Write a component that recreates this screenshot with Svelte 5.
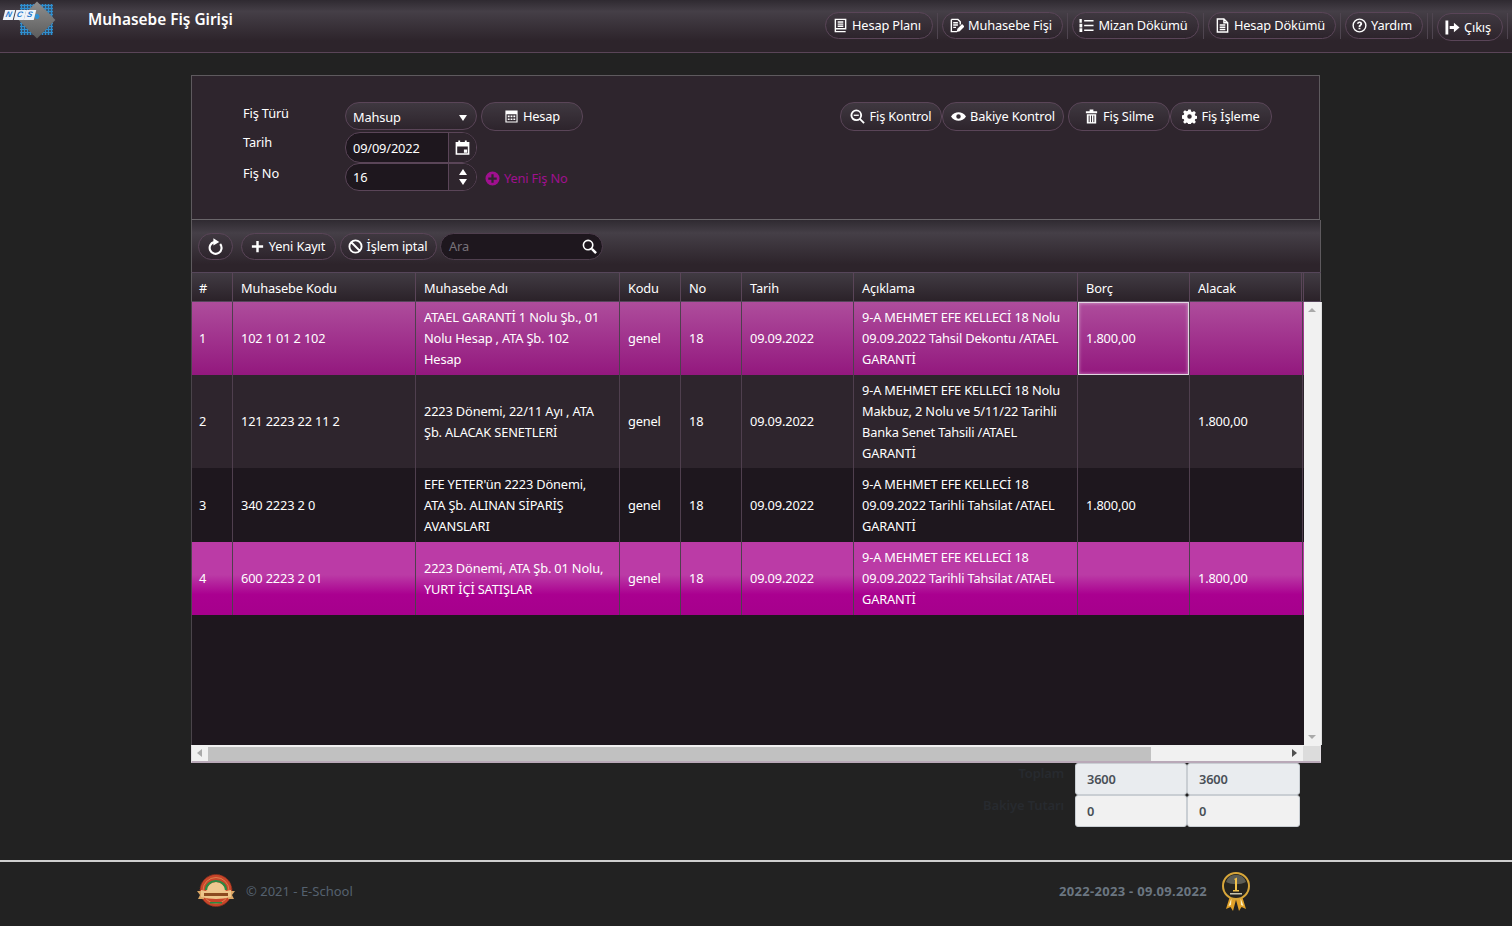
<script>
  const icons = {
    book: [['M2.500 1.500h11v10h-11z M2.500 11.500v3h11 M5 4.200h6 M5 6.500h6 M5 8.800h6', 's']],
    edit: [['M2.500 1.500h7l2.500 2.500v3 M2.500 1.500v13h6 M4.500 5h5 M4.500 7.500h5 M4.500 10h3', 's'], ['M8 15l1-3.500 5-5 2.500 2.500-5 5z', 'f']],
    list: [['M5.500 3h10 M5.500 8h10 M5.500 13h10', 's'], ['M.5 1h2.500v4H.5z M.5 6h3v4h-3z M.5 11h3v4h-3z', 'f']],
    doc: [['M2.500 1h7l4 4v10h-11z M5 7.500h6 M5 9.800h6 M5 12.200h6 M9.500 1v4h4', 's']],
    help: [['M8 1.200a6.800 6.800 0 1 0 0 13.600A6.800 6.800 0 0 0 8 1.200z', 's'], ['M5.200 6a2.900 2.900 0 0 1 5.700.2c0 1.800-1.900 1.900-1.900 3.300H7c0-2.300 1.900-2.200 1.900-3.300a.9.9 0 0 0-1.800-.1z M7 10.300h2v1.800H7z', 'f']],
    exit: [['M.5 .5h3v15h-3z M5 6.500h4.500V3L15.500 8l-6 5V9.500H5z', 'f']],
    calc: [['M1.500 1.500h13v13h-13z M2.700 5.600h10.600v7.700H2.700z M4 7h2v1.700H4z M7 7h2v1.700H7z M10 7h2v1.700h-2z M4 10h2v1.700H4z M7 10h2v1.700H7z M10 10h2v1.700h-2z', 'e']],
    zoomminus: [['M6.700 1.500a5.200 5.200 0 1 0 0 10.400 5.200 5.200 0 0 0 0-10.400z M10.500 10.500l4.500 4.500', 's2'], ['M4 6h5.400v1.400H4z', 'f']],
    eye: [['M0 8c2-3.200 5-4.600 8-4.600S14 4.800 16 8c-2 3.200-5 4.600-8 4.600S2 11.200 0 8z M8 5.600a2.400 2.400 0 1 0 0 4.800 2.400 2.400 0 0 0 0-4.800z', 'e']],
    trash: [['M2 2.500h12v2H2z M6 .5h4v2H6z M3 5.500h10V15.500H3z', 'f'], ['M5.500 7v7 M8 7v7 M10.500 7v7', 'sd']],
    gear: [['M6.700 .5h2.600l.4 2.200 1.300.6 1.900-1.200 1.900 1.900-1.200 1.900.6 1.300 2.200.4v2.600l-2.200.4-.6 1.300 1.200 1.900-1.900 1.900-1.900-1.200-1.300.6-.4 2.200H6.700l-.4-2.200-1.300-.6-1.900 1.200-1.900-1.900 1.200-1.900-.6-1.300-2.200-.4V6.700l2.200-.4.6-1.300-1.200-1.900 1.900-1.900 1.900 1.200 1.300-.6z M8 5.600a2.400 2.400 0 1 0 0 4.800 2.400 2.400 0 0 0 0-4.800z', 'e']],
    refresh: [['M6.600 3.900A5.600 5.600 0 1 0 12.400 5.700', 's2'], ['M6 .3l5.500 3.400L6 7z', 'f']],
    plus: [['M6.700 2h2.600v4.700H14v2.600H9.300V14H6.700V9.300H2V6.700h4.700z', 'f']],
    ban: [['M8 1.500a6.500 6.500 0 1 0 0 13 6.500 6.500 0 0 0 0-13z M3.500 3.500l9 9', 's2']],
    search: [['M6.500 1.500a5 5 0 1 0 0 10 5 5 0 0 0 0-10z', 's15'], ['M10.500 10.500l4.500 4.500', 's25']],
    cal: [['M1.500 3h13v12h-13z M1.500 6h13', 's15'], ['M3.500 .5h2v3.500h-2z M10.500 .5h2v3.500h-2z M1.500 3h13v3h-13z M9.500 10h3.500v3.500H9.500z', 'f']],
    plusc: [['M8 .5a7.500 7.500 0 1 0 0 15 7.500 7.500 0 0 0 0-15z M6.800 3.500h2.400v3.300h3.300v2.400H9.200v3.300H6.800V9.200H3.500V6.800h3.300z', 'e']]
  };

  const topNav = [
    { icon: 'book', label: 'Hesap Planı', w: 108 },
    { icon: 'edit', label: 'Muhasebe Fişi', w: 121 },
    { icon: 'list', label: 'Mizan Dökümü', w: 127 },
    { icon: 'doc', label: 'Hesap Dökümü', w: 128 },
    { icon: 'help', label: 'Yardım', w: 78 }
  ];
  const actions = [
    { icon: 'zoomminus', label: 'Fiş Kontrol', w: 102 },
    { icon: 'eye', label: 'Bakiye Kontrol', w: 122 },
    { icon: 'trash', label: 'Fiş Silme', w: 102 },
    { icon: 'gear', label: 'Fiş İşleme', w: 102 }
  ];
  const head = ['#', 'Muhasebe Kodu', 'Muhasebe Adı', 'Kodu', 'No', 'Tarih', 'Açıklama', 'Borç', 'Alacak'];
  const rows = [
    { cls: 'pink h73', cells: ['1', '102 1 01 2 102', 'ATAEL GARANTİ 1 Nolu Şb., 01 Nolu Hesap , ATA Şb. 102 Hesap', 'genel', '18', '09.09.2022', '9-A MEHMET EFE KELLECİ 18 Nolu 09.09.2022 Tahsil Dekontu /ATAEL GARANTİ', '1.800,00', ''] },
    { cls: 'odd h93', cells: ['2', '121 2223 22 11 2', '2223 Dönemi, 22/11 Ayı , ATA Şb. ALACAK SENETLERİ', 'genel', '18', '09.09.2022', '9-A MEHMET EFE KELLECİ 18 Nolu Makbuz, 2 Nolu ve 5/11/22 Tarihli Banka Senet Tahsili /ATAEL GARANTİ', '', '1.800,00'] },
    { cls: 'even h74', cells: ['3', '340 2223 2 0', "EFE YETER'ün 2223 Dönemi, ATA Şb. ALINAN SİPARİŞ AVANSLARI", 'genel', '18', '09.09.2022', '9-A MEHMET EFE KELLECİ 18 09.09.2022 Tarihli Tahsilat /ATAEL GARANTİ', '1.800,00', ''] },
    { cls: 'mag h73', cells: ['4', '600 2223 2 01', '2223 Dönemi, ATA Şb. 01 Nolu, YURT İÇİ SATIŞLAR', 'genel', '18', '09.09.2022', '9-A MEHMET EFE KELLECİ 18 09.09.2022 Tarihli Tahsilat /ATAEL GARANTİ', '', '1.800,00'] }
  ];
</script>

{#snippet icon(name)}
  <svg class="ic" viewBox="0 0 16 16" aria-hidden="true">
    {#each icons[name] as p}
      <path d={p[0]} class={p[1]} />
    {/each}
  </svg>
{/snippet}

<div class="page">
  <header class="top">
    <div class="logo">
      <div class="dots"></div>
      <div class="diamond"><span class="hole"></span></div>
      <div class="ncs"><span>N</span><span>C</span><span>S</span></div>
    </div>
    <h1>Muhasebe Fiş Girişi</h1>
    <nav>
      {#each topNav as b}
        <button class="pill" style="width:{b.w}px">{@render icon(b.icon)}{b.label}</button>
        <i class="sep"></i>
      {/each}
      <i class="sep2"></i>
      <button class="pill exit">{@render icon('exit')}Çıkış</button>
      <i class="sep last"></i>
    </nav>
  </header>

  <main>
    <section class="form">
      <div class="fields">
        <label class="l1">Fiş Türü</label>
        <div class="select">Mahsup<b class="tri"></b></div>
        <button class="pill hesap">{@render icon('calc')}Hesap</button>

        <label>Tarih</label>
        <div class="input"><span>09/09/2022</span><em>{@render icon('cal')}</em></div>
        <span></span>

        <label>Fiş No</label>
        <div class="input spin"><span>16</span><em><b class="tri up"></b><b class="tri"></b></em></div>
        <a class="newno">{@render icon('plusc')}Yeni Fiş No</a>
      </div>
      <div class="actions">
        {#each actions as b}
          <button class="pill" style="width:{b.w}px">{@render icon(b.icon)}{b.label}</button>
        {/each}
      </div>
    </section>

    <section class="grid">
      <div class="toolbar">
        <button class="pill round">{@render icon('refresh')}</button>
        <button class="pill ynk">{@render icon('plus')}Yeni Kayıt</button>
        <button class="pill ipt">{@render icon('ban')}İşlem iptal</button>
        <div class="searchbox"><span>Ara</span>{@render icon('search')}</div>
      </div>
      <div class="thead tr">
        {#each head as h}<div class="th">{h}</div>{/each}
        <div class="th"></div>
        <div class="th end"></div>
      </div>
      <div class="viewport">
        <div class="tbody">
          {#each rows as r, ri}
            <div class="tr {r.cls}">
              {#each r.cells as c, ci}
                <div class="td" class:sel={ri === 0 && ci === 7}><span>{c}</span></div>
              {/each}
              <div class="td"></div>
            </div>
          {/each}
        </div>
        <div class="vbar"><b class="tri gup"></b><b class="tri gdn"></b></div>
      </div>
      <div class="hbar">
        <b class="tri gl"></b>
        <div class="thumb"></div>
        <b class="tri gr"></b>
        <div class="corner"></div>
      </div>
    </section>

    <section class="totals">
      <div class="sumlabels"><span>Toplam</span><span>Bakiye Tutarı</span></div>
      <div class="sumgrid">
        <div class="a">3600</div><div class="a">3600</div>
        <div class="b">0</div><div class="b">0</div>
      </div>
    </section>
  </main>

  <footer>
    <div class="fl">
      <svg class="seal" viewBox="0 0 38 34">
        <circle cx="19" cy="16.500" r="16" fill="#c8452a" stroke="#8c2f1c" stroke-width="1" stroke-dasharray="1.500 1"/>
        <circle cx="19" cy="16.500" r="13" fill="none" stroke="#e29a5a" stroke-width=".7"/>
        <path d="M9 18a10 10 0 0 1 20 0z" fill="#efc890"/>
        <path d="M9 16a10 9 0 0 1 20 0" fill="none" stroke="#2c8a42" stroke-width="2.200"/>
        <path d="M0 17h6l1 8H1l2-4zM38 17h-6l-1 8h6l-2-4z" fill="#dca765"/>
        <path d="M4 16c10 2.500 20 2.500 30 0v7c-10 2.500-20 2.500-30 0z" fill="#eec58a"/>
        <path d="M7 19h24v3H7z" fill="#8c4a20"/>
        <path d="M13 28h12v1.500H13z" fill="#2c8a42"/>
      </svg>
      <span>© 2021 - E-School</span>
    </div>
    <div class="fr">
      <strong>2022-2023 - 09.09.2022</strong>
      <svg class="medal" viewBox="0 0 28 40">
        <path d="M8 24l-4 13 4.500-2 2.500 4 3.500-13zM20 24l4 13-4.500-2-2.500 4-3.500-13z" fill="#e0a028"/>
        <path d="M9.500 26l-3 8 2.500-1zM18.500 26l3 8-2.500-1z" fill="#fff2c0"/>
        <circle cx="14" cy="14" r="13" fill="#25241f" stroke="#d7a63a" stroke-width="2"/>
        <path d="M4 10a10.500 10.500 0 0 1 20 0c-6 3-14 3-20 0z" fill="#5c5d55"/>
        <path d="M12 7l3-1.500V18h2v1.500h-6V18h2V8z" fill="#f2c24b"/>
        <rect x="8" y="21" width="12" height="1.500" fill="#c9c5b0"/>
      </svg>
    </div>
  </footer>
</div>

<style>
  :global(body) { margin: 0; background: #222222; }
  .page { width: 1512px; height: 926px; display: flex; flex-direction: column; overflow: hidden; background: #222; color: #fff; font: 12.8px/21px "Noto Sans", "Open Sans", sans-serif; letter-spacing: -.15px; }

  .top { height: 53px; box-sizing: border-box; border-bottom: 1px solid #5a4558; display: flex; background: linear-gradient(#2f2a31 0, #453f47 22%, #2d242b 78%, #2d242b 100%); flex: none; }
  .logo { position: relative; width: 88px; height: 40px; flex: none; }
  .dots { position: absolute; left: 20px; top: 4px; width: 33px; height: 31px; background: radial-gradient(circle, #2f8fd0 1.100px, rgba(47, 143, 208, .35) 1.300px) 0 0 / 3px 3px; }
  .diamond { position: absolute; left: 23.500px; top: 7px; width: 26px; height: 26px; transform: rotate(45deg); background: linear-gradient(135deg, #8e8e8e, #5c5c5c); }
  .hole { position: absolute; left: 8px; top: 8px; width: 5px; height: 5px; border-radius: 50%; background: #2f8fd0; }
  .ncs { position: absolute; left: 4px; top: 10px; display: flex; gap: 1px; font: italic 700 8px/10px "Liberation Sans", sans-serif; color: #2277cc; letter-spacing: 0; }
  .ncs span { width: 9.500px; height: 10px; background: #eef4fa; text-align: center; transform: skewX(-14deg); }
  h1 { margin: 8px 0 0; font-size: 15.400px; line-height: 24px; font-weight: 600; height: 24px; letter-spacing: 0; }
  nav { margin-left: auto; display: flex; align-items: flex-start; padding-top: 12px; padding-right: 4px; }
  nav .pill { padding-right: 4px; }
  .sep { width: 1px; height: 26px; background: #4f4550; margin: 1px 4px 0; }
  .sep.last { margin-right: 0; }
  .sep2 { width: 1px; height: 26px; background: #4f4550; margin: 1px 4px 0 0; }

  .pill { box-sizing: border-box; height: 27px; border: 1px solid #5a4558; border-radius: 14px; background: linear-gradient(#3f3840, #2d242c); color: #fff; font: inherit; letter-spacing: inherit; display: inline-flex; align-items: center; justify-content: center; gap: 4px; padding: 0; white-space: nowrap; }
  .exit { width: 66px; height: 28px; margin-top: 1px; }
  .ic { width: 15px; height: 15px; flex: none; }
  .ic path.f { fill: currentColor; }
  .ic path.e { fill: currentColor; fill-rule: evenodd; }
  .ic path.s { fill: none; stroke: currentColor; stroke-width: 1.500; }
  .ic path.s15 { fill: none; stroke: currentColor; stroke-width: 1.700; }
  .ic path.s2 { fill: none; stroke: currentColor; stroke-width: 2; }
  .ic path.s25 { fill: none; stroke: currentColor; stroke-width: 2.600; }
  .ic path.sd { fill: none; stroke: #2d242c; stroke-width: 1; }

  main { flex: 1; box-sizing: border-box; padding: 22px 0 0 191px; display: flex; flex-direction: column; min-height: 0; }
  .form { box-sizing: border-box; width: 1129px; height: 145px; background: #2e252d; border: 1px solid #5e5a5e; border-bottom-color: #6a666a; display: flex; padding: 26px 47px 0 51px; flex: none; }
  .fields { display: grid; grid-template-columns: 102px 132px auto; grid-template-rows: 30px 31px 28px; align-content: start; }
  label { line-height: 20px; }
  .l1 { margin-top: 1px; }
  .select { box-sizing: border-box; height: 28px; border: 1px solid #5a4558; border-radius: 14px; background: linear-gradient(#3f3840, #2d242c); padding: 4px 7px 0; position: relative; }
  .tri { display: block; width: 0; height: 0; border-left: 4px solid transparent; border-right: 4px solid transparent; border-top: 6px solid #fff; }
  .select .tri { position: absolute; right: 9px; top: 12px; }
  .hesap { width: 102px; height: 29px; margin-left: 4px; }
  .input { box-sizing: border-box; height: 31px; width: 132px; border: 1px solid #5a4558; border-radius: 15px; background: #1e171e; display: flex; overflow: hidden; }
  .input span { flex: 1; padding: 5px 0 0 7px; }
  .input em { width: 27px; border-left: 1px solid #5a4558; background: #2e252d; display: flex; flex-direction: column; align-items: center; justify-content: center; gap: 4px; font-style: normal; }
  .spin { height: 28px; }
  .spin span { padding-top: 3px; }
  .tri.up { border-top: 0; border-bottom: 6px solid #fff; }
  .newno { color: #a0108f; display: inline-flex; align-items: center; gap: 4px; margin: 1px 0 0 8px; height: 28px; }
  .actions { margin-left: auto; display: flex; align-items: flex-start; height: 29px; }
  .actions .pill { height: 29px; }
  .actions .pill:nth-child(3) { margin-left: 4px; }

  .grid { box-sizing: border-box; width: 1130px; height: 543px; display: flex; flex-direction: column; flex: none; }
  .toolbar { height: 52px; flex: none; display: flex; align-items: center; box-sizing: border-box; padding: 0 0 0 6px; background: linear-gradient(#2f2a31 0, #453f47 25%, #2d242b 85%); border-left: 1px solid #5e5a5e; border-right: 1px solid #5e5a5e; }
  .round { width: 35px; height: 27px; margin-right: 8px; }
  .round .ic { width: 17px; height: 17px; }
  .ynk { width: 95px; margin-right: 4px; padding-right: 2px; }
  .ipt { width: 97px; margin-right: 3px; padding-right: 2px; }
  .searchbox { box-sizing: border-box; width: 163px; height: 27px; background: #1e171e; border: 1px solid #4f3f4e; border-radius: 14px; display: flex; align-items: center; justify-content: space-between; padding: 0 5px 0 8px; color: #77727a; }
  .searchbox .ic { color: #fff; }

  .tr { display: grid; grid-template-columns: 41px 183px 204px 61px 61px 112px 224px 112px 113px 1px; }
  .thead { height: 30px; flex: none; grid-template-columns: 41px 183px 204px 61px 61px 112px 224px 112px 112px 2px 17px; background: linear-gradient(#413b43, #2b2229); border-top: 1px solid #56465a; box-sizing: border-box; border-bottom: 1px solid #55455a; border-left: 1px solid #5e5a5e; }
  .th { border-right: 1px solid #5a4558; padding: 5px 0 0 8px; box-sizing: border-box; font-weight: 400; }
  .th:first-child { padding-left: 7px; }
  .th.end { border-right: 1px solid #5e5a5e; padding: 0; }
  .th:nth-last-child(2) { padding: 0; }

  .viewport { height: 443px; flex: none; display: flex; background: #1e171e; border-left: 1px solid #4a444a; }
  .tbody { width: 1112px; flex: none; }
  .td { box-sizing: border-box; border-right: 1px solid #4f3f4e; padding: 0 8px; display: flex; align-items: center; }
  .td:first-child { padding-left: 7px; }
  .td:nth-child(3) { padding-right: 13px; }
  .h73 { height: 73px; } .h93 { height: 93px; } .h74 { height: 74px; }
  .pink { background: linear-gradient(#ae4d9c, #93187e); }
  .mag { background: linear-gradient(#bb3ba6 0, #bb3ba6 45%, #aa0090 72%, #a6008c); }
  .odd { background: #2e252d; }
  .even { background: #1e171e; }
  .sel { box-shadow: inset 0 0 0 1px #e2d6e1, inset 0 0 3px 2px rgba(255, 255, 255, .3); }
  .vbar { width: 17px; flex: none; background: #f1f1f1; border-right: 1px solid #ddd; position: relative; }
  .tri.gup { position: absolute; top: 6px; left: 4px; border-top: 0; border-bottom: 4px solid #aaa; }
  .tri.gdn { position: absolute; bottom: 6px; left: 4px; border-top: 4px solid #aaa; }
  .hbar { height: 18px; flex: none; box-sizing: border-box; background: #f1f1f1; position: relative; display: flex; align-items: center; border: 1px solid #e2dde2; border-bottom: 2px solid #b9a9b8; border-top-color: #f1f1f1; }
  .thumb { margin-left: 16px; width: 943px; height: 14px; background: #c1c1c1; }
  .tri.gl { position: absolute; left: 5px; top: 3px; border-left: 0; border-top: 4px solid transparent; border-bottom: 4px solid transparent; border-right: 5px solid #aaa; }
  .tri.gr { position: absolute; right: 23px; top: 3px; border-right: 0; border-top: 4px solid transparent; border-bottom: 4px solid transparent; border-left: 5px solid #505050; }
  .corner { position: absolute; right: 0; top: 0; bottom: 0; width: 17px; background: #dcdcdc; }

  .totals { width: 1109px; display: flex; justify-content: flex-end; align-items: flex-start; }
  .sumlabels { display: flex; flex-direction: column; align-items: flex-end; margin: 0 11px 0 0; font-weight: 600; font-size: 13px; gap: 11px; color: #272a2f; }
  .sumgrid { display: grid; grid-template-columns: 112px 113px; grid-template-rows: 32px 32px; color: #495057; font-weight: 600; }
  .sumgrid div { box-sizing: border-box; padding: 5px 11px; border: 1px solid #c9ced3; border-radius: 3px; }
  .a { background: #e9ecef; }
  .b { background: #f1f1f1; }

  footer { height: 66px; flex: none; box-sizing: border-box; border-top: 2px solid #cfcfcf; display: flex; justify-content: space-between; align-items: center; padding: 0 262px 6px 197px; color: #55616f; letter-spacing: 0; font-size: 13px; }
  .fl, .fr { display: flex; align-items: center; }
  .seal { width: 38px; height: 34px; margin-right: 11px; }
  .fr strong { font-weight: 700; color: #6b7681; letter-spacing: .3px; }
  .medal { width: 28px; height: 40px; margin: 2px 0 0 15px; }
</style>
